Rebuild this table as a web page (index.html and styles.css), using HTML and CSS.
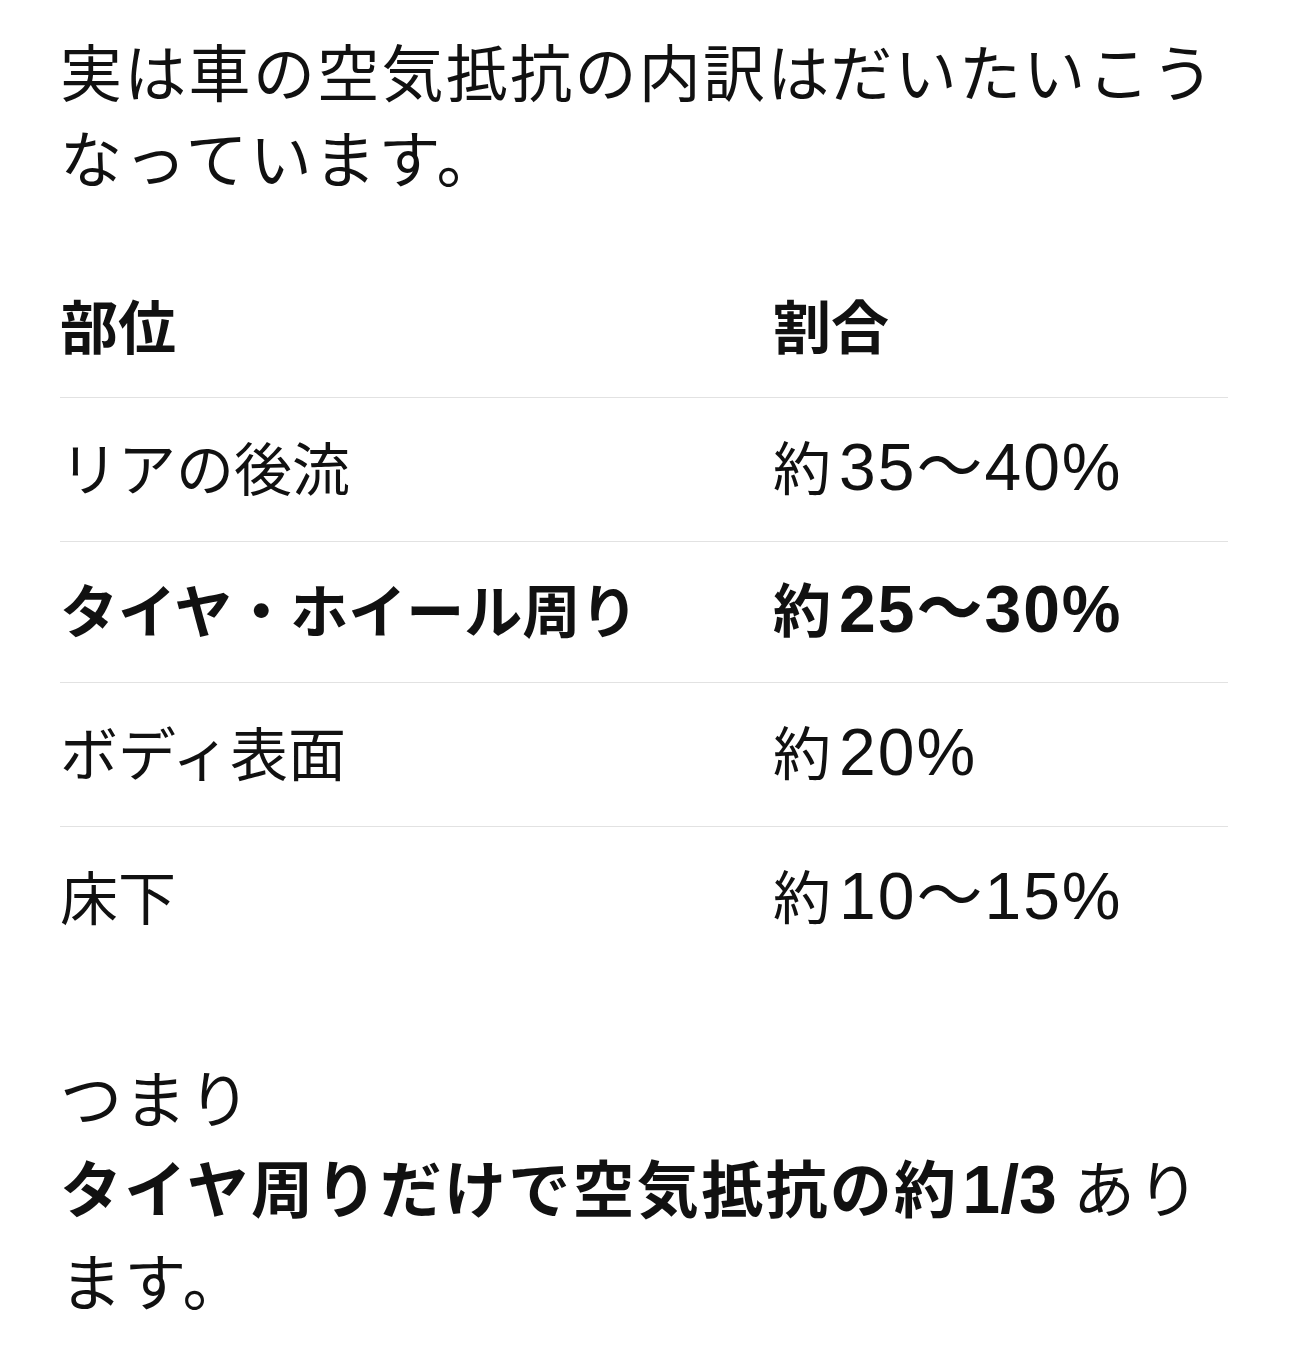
FILE: index.html
```html
<!DOCTYPE html>
<html lang="ja">
<head>
<meta charset="utf-8">
<link rel="stylesheet" href="styles.css">
</head>
<body>
<main class="page">
  <p class="lead">実は車の空気抵抗の内訳はだいたいこうなっています。</p>
  <div class="table">
    <div class="row head">
      <div class="cell">部位</div>
      <div class="cell">割合</div>
    </div>
    <div class="row">
      <div class="cell">リアの後流</div>
      <div class="cell">約<span class="num">35〜40%</span></div>
    </div>
    <div class="row strong">
      <div class="cell">タイヤ・ホイール周り</div>
      <div class="cell">約<span class="num">25〜30%</span></div>
    </div>
    <div class="row">
      <div class="cell">ボディ表面</div>
      <div class="cell">約<span class="num">20%</span></div>
    </div>
    <div class="row last">
      <div class="cell">床下</div>
      <div class="cell">約<span class="num">10〜15%</span></div>
    </div>
  </div>
  <p class="summary">つまり<br><b>タイヤ周りだけで空気抵抗の約<span class="frac">1/3</span></b> あります。</p>
</main>
</body>
</html>
```

FILE: styles.css
```css
html, body {
  margin: 0;
  padding: 0;
  background: #ffffff;
}
body {
  font-family: "Noto Sans CJK JP", "Noto Sans", sans-serif;
  color: #111111;
}
.page {
  padding: 27px 61px 0 60px;
}
.lead {
  margin: 0;
  font-size: 62px;
  letter-spacing: 2.3px;
  line-height: 86px;
}
.table {
  margin-top: 59px;
  display: flex;
  flex-direction: column;
}
.row {
  box-sizing: border-box;
  display: grid;
  grid-template-columns: 713px 1fr;
  align-items: center;
  height: 144px;
  padding-bottom: 8px;
  border-bottom: 1px solid #e2e2e2;
  font-size: 58px;
  line-height: 70px;
}
.row.head {
  height: 140px;
  font-weight: 700;
}
.row.strong {
  font-weight: 700;
  height: 141px;
}
.row.last {
  border-bottom: none;
  height: 143px;
}
.num {
  font-family: "Liberation Sans", "Noto Sans CJK JP", sans-serif;
  font-size: 66px;
  letter-spacing: 2px;
  margin-left: 8px;
}
.summary {
  margin: 81px 0 0 0;
  font-size: 62px;
  letter-spacing: 2.3px;
  line-height: 90px;
}
.summary b {
  font-weight: 700;
}
.frac {
  font-family: "Liberation Sans", sans-serif;
  font-size: 68px;
  letter-spacing: 0;
  margin-left: 4px;
}
```
